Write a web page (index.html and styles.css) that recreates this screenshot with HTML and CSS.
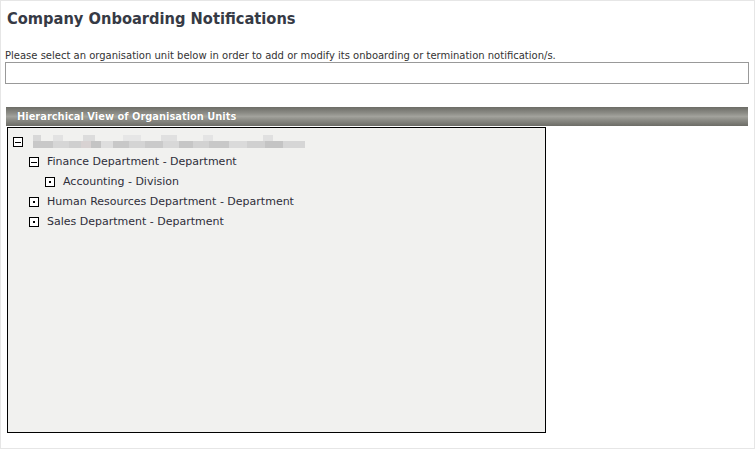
FILE: index.html
```html
<!DOCTYPE html>
<html>
<head>
<meta charset="utf-8">
<link rel="stylesheet" href="styles.css">
</head>
<body>
<div class="page">
  <h1 class="title">Company Onboarding Notifications</h1>
  <p class="hint">Please select an organisation unit below in order to add or modify its onboarding or termination notification/s.</p>
  <div class="select-box"></div>
  <div class="panel-head">Hierarchical View of Organisation Units</div>
  <div class="tree">
    <ul class="level">
      <li>
        <div class="node"><span class="toggle minus"></span><span class="label redacted">Organisation Name - Company</span></div>
        <ul class="level">
          <li>
            <div class="node"><span class="toggle minus"></span><span class="label">Finance Department - Department</span></div>
            <ul class="level">
              <li><div class="node"><span class="toggle dot"></span><span class="label">Accounting - Division</span></div></li>
            </ul>
          </li>
          <li><div class="node"><span class="toggle dot"></span><span class="label">Human Resources Department - Department</span></div></li>
          <li><div class="node"><span class="toggle dot"></span><span class="label">Sales Department - Department</span></div></li>
        </ul>
      </li>
    </ul>
  </div>
</div>
</body>
</html>
```

FILE: styles.css
```css
html, body {
  margin: 0;
  padding: 0;
  background: #ffffff;
}

.page {
  box-sizing: border-box;
  width: 755px;
  height: 449px;
  border: 1px solid #e6e6e6;
  font-family: "DejaVu Sans", sans-serif;
  color: #333333;
}

.title {
  margin: 0;
  padding: 7px 0 0 6px;
  font-family: "DejaVu Sans Condensed", "DejaVu Sans", sans-serif;
  font-size: 16.3px;
  line-height: 21px;
  font-weight: bold;
  color: #363a45;
}

.hint {
  margin: 20px 0 0 4px;
  font-size: 10px;
  line-height: 13px;
  color: #333333;
}

.select-box {
  box-sizing: border-box;
  margin: 0 0 0 4px;
  width: 744px;
  height: 22px;
  border: 1px solid #999999;
  background: #ffffff;
}

.panel-head {
  box-sizing: border-box;
  margin: 23px 0 0 5px;
  width: 742px;
  height: 19px;
  padding-left: 11px;
  font-size: 9.9px;
  line-height: 19px;
  font-weight: bold;
  color: #ffffff;
  text-shadow: 0 0 1px #5a5a55;
  background: linear-gradient(to bottom, #6c6c66 0%, #8a8a84 30%, #a2a29c 50%, #8a8a84 70%, #6c6c66 100%);
}

.tree {
  box-sizing: border-box;
  margin: 1px 0 0 6px;
  width: 539px;
  height: 306px;
  border: 1px solid #000000;
  background: #f1f1ef;
  padding-top: 4px;
  padding-left: 5px;
}

.level {
  list-style: none;
  margin: 0;
  padding: 0;
}

.level .level {
  padding-left: 16px;
}

.node {
  display: flex;
  align-items: center;
  height: 20px;
}

.toggle {
  position: relative;
  box-sizing: border-box;
  flex: none;
  width: 10px;
  height: 10px;
  border: 1px solid #000000;
  background: #ffffff;
  margin-right: 8px;
}

.toggle.minus::after {
  content: "";
  position: absolute;
  left: 1px;
  right: 1px;
  top: 3.5px;
  height: 1.2px;
  background: #000000;
}

.toggle.dot::after {
  content: "";
  position: absolute;
  left: 3px;
  top: 3px;
  width: 2px;
  height: 2px;
  background: #000000;
}

.label {
  font-size: 11px;
  line-height: 14px;
  color: #2e2e3a;
}

.redacted {
  display: inline-block;
  width: 272px;
  height: 14px;
  margin-left: 2px;
  color: transparent;
  overflow: hidden;
  white-space: nowrap;
  background:
    linear-gradient(to right,
      #d8d8d8 0 8px, transparent 8px 20px, #e2e2e2 20px 30px, transparent 30px 50px,
      #dcdcdc 50px 62px, transparent 62px 90px, #e6e6e6 90px 108px, transparent 108px 128px,
      #e0e0e0 128px 144px, transparent 144px 170px, #e4e4e4 170px 180px, transparent 180px 230px,
      #e0e0e0 230px 240px, transparent 240px 272px) 0 0 / 272px 6px no-repeat,
    linear-gradient(to right,
      #c8c8c8 0 20px, #d6d6d6 20px 36px, #cfcfcf 36px 48px, #d8d2d2 48px 58px, #c4c4c4 58px 68px,
      #dedede 68px 80px, #c8c8c8 80px 96px, #d4d4d4 96px 112px, #cacaca 112px 130px,
      #d8d8d8 130px 146px, #c6c6c6 146px 160px, #d2d2d2 160px 176px, #c8c8c8 176px 196px,
      #dadada 196px 214px, #d0d0d0 214px 232px, #c4c4c4 232px 250px, #d6d6d6 250px 272px) 0 6px / 272px 7px no-repeat;
}
```
